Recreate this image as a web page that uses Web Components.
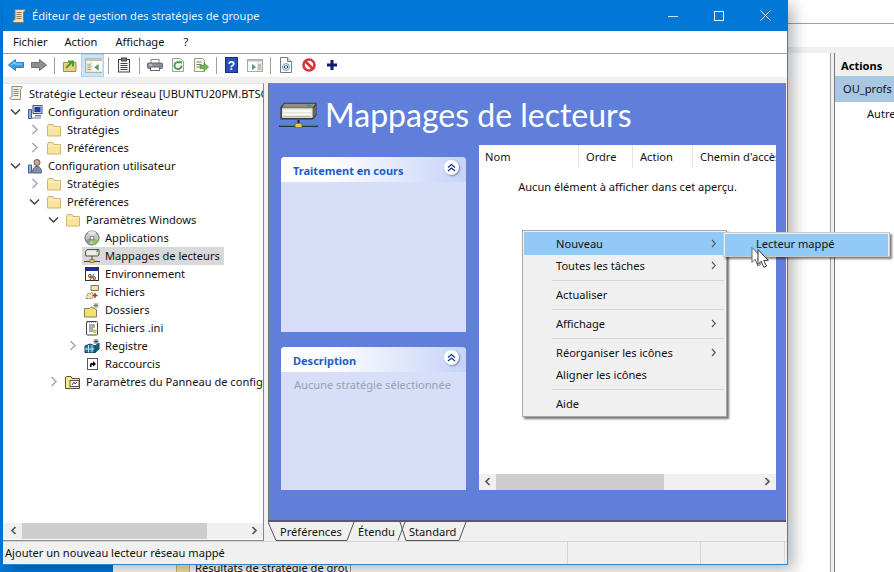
<!DOCTYPE html>
<html lang="fr"><head><meta charset="utf-8"><title>Éditeur de gestion des stratégies de groupe</title>
<style>
html,body{margin:0;height:100%;overflow:hidden}
body{background:#0078d7;font:11.1px "Noto Sans","Open Sans",sans-serif;color:#111;position:relative;width:894px;height:572px}
</style></head><body>
<bg-window></bg-window>
<gpo-window>
  <title-bar slot="title">Éditeur de gestion des stratégies de groupe</title-bar>
  <menu-bar slot="menu"><span>Fichier</span><span>Action</span><span style="margin-left:1px">Affichage</span><span style="margin-left:2px">?</span></menu-bar>
  <tool-bar slot="tools"></tool-bar>
  <tree-pane slot="tree">
    <tree-row level="0" icon="scroll" root>Stratégie Lecteur réseau [UBUNTU20PM.BTSC</tree-row>
    <tree-row level="1" chev="open" icon="computer">Configuration ordinateur</tree-row>
    <tree-row level="2" chev="closed" icon="folder">Stratégies</tree-row>
    <tree-row level="2" chev="closed" icon="folder">Préférences</tree-row>
    <tree-row level="1" chev="open" icon="user">Configuration utilisateur</tree-row>
    <tree-row level="2" chev="closed" icon="folder">Stratégies</tree-row>
    <tree-row level="2" chev="open" icon="folder">Préférences</tree-row>
    <tree-row level="3" chev="open" icon="folder">Paramètres Windows</tree-row>
    <tree-row level="4" icon="disc">Applications</tree-row>
    <tree-row level="4" icon="drive" selected>Mappages de lecteurs</tree-row>
    <tree-row level="4" icon="env">Environnement</tree-row>
    <tree-row level="4" icon="files">Fichiers</tree-row>
    <tree-row level="4" icon="newfolder">Dossiers</tree-row>
    <tree-row level="4" icon="ini">Fichiers .ini</tree-row>
    <tree-row level="4" chev="closed" icon="registry">Registre</tree-row>
    <tree-row level="4" icon="shortcut">Raccourcis</tree-row>
    <tree-row level="3" chev="closed" icon="cpanel">Paramètres du Panneau de config</tree-row>
  </tree-pane>
  <ext-pane slot="main">
    <task-panel title="Traitement en cours" style="height:175px"></task-panel>
    <task-panel title="Description" style="height:143px;margin-top:15px"><span style="color:#9aa0b4">Aucune stratégie sélectionnée</span></task-panel>
    <list-view slot="list"></list-view>
  </ext-pane>
  <tab-strip slot="tabs"></tab-strip>
  <status-bar slot="status">Ajouter un nouveau lecteur réseau mappé</status-bar>
</gpo-window>
<context-menu></context-menu>
<script>
const ICONS={
scroll:`<path d="M4 1.500h9.500c.8 0 1 1 .3 1.500L12.500 4v8.500c0 1 1 1.500 0 2H3.500C2 14.500 1.500 13 2.500 12L4 11.500V3c0-.8-.5-1.500 0-1.500z" fill="#f3e2b8" stroke="#8a7a55"/><path d="M5.500 4.500h5M5.500 6.500h5M5.500 8.500h5M5.500 10.500h5" stroke="#8a7a55"/>`,
scrollg:`<path d="M4 1.500h9.500c.8 0 1 1 .3 1.500L12.500 4v8.500c0 1 1 1.500 0 2H3.500C2 14.500 1.500 13 2.500 12L4 11.500V3c0-.8-.5-1.500 0-1.500z" fill="#f4efdf" stroke="#8d8d80"/><path d="M5.500 4.500h5M5.500 6.500h5M5.500 8.500h5M5.500 10.500h5" stroke="#8d8d80"/>`,
folder:`<path d="M1.500 3.500V14h13V4.500H8L7 2.500H3z" fill="#f8e3a0" stroke="#d0b56a"/><path d="M2 6h12" stroke="#fdf3cf"/>`,
computer:`<rect x="6" y="1.500" width="9" height="8" fill="#c5d3e8" stroke="#44588a"/><rect x="7.500" y="3" width="6" height="5" fill="#1f3f9f"/><path d="M8 11h6v1.500H8z" fill="#6b7ea8"/><path d="M1.500 5.500h3v9h-3z" fill="#8fb2dc" stroke="#41608f"/><path d="M5 14h9" stroke="#778"/>`,
user:`<circle cx="10" cy="4.500" r="3" fill="#c9a98e" stroke="#6c5b52"/><path d="M5.500 15c0-5 2-6.500 4.500-6.500s4.500 1.500 4.500 6.500z" fill="#7e8ea8" stroke="#56627a"/><path d="M1.500 7h3v8h-3z" fill="#8fb2dc" stroke="#41608f"/>`,
disc:`<circle cx="8" cy="8" r="7" fill="#c4cbc4" stroke="#5f6a5f"/><path d="M8 8L4 2.500A7 7 0 0 1 12 2.500z" fill="#e4e8e2"/><path d="M8 8l6.500 2A7 7 0 0 1 9 15z" fill="#87c55a"/><path d="M8 8L1.500 10A7 7 0 0 0 5 14.500z" fill="#909890"/><circle cx="8" cy="8" r="2" fill="#fff" stroke="#666"/>`,
drive:`<path d="M1.500 3.500 3 1.500h12v5.500l-1.500 1h-12z" fill="#dcdcd4" stroke="#555"/><path d="M3 4h9M3 6h9" stroke="#fff"/><path d="M12.500 3h1.500" stroke="#2a9a3a" stroke-width="1.500"/><path d="M0 13.500h16" stroke="#444"/><path d="M8 8v4" stroke="#444"/><rect x="6" y="11.500" width="4" height="3" fill="#e8cc4a" stroke="#806a20" stroke-width=".7"/>`,
env:`<rect x="1.500" y="1.500" width="13" height="13" fill="#fff" stroke="#333"/><path d="M2 2h12v3H2z" fill="#1f2f8f"/><text x="8" y="13.500" font-size="9" font-family="Liberation Sans" font-weight="bold" text-anchor="middle" fill="#333">%</text>`,
files:`<path d="M7 1.500h7.500v5H7z" fill="#f4e4a0" stroke="#777"/><path d="M2 14.500 4 9l3 1 1-2 2 3-2 3.500z" fill="#f6e7ae" stroke="#777" stroke-dasharray="1.500 1"/><path d="M11 9v5M8.500 11.500h5" stroke="#c22222" stroke-width="1.400"/>`,
newfolder:`<path d="M.5 6.500h5l1.500-1.500 5.500 2.500V15H.5z" fill="#efe07a" stroke="#8a8244"/><path d="M12 1v5M9.500 3.500h5M10 1.500l4 4M14 1.500l-4 4" stroke="#777"/>`,
ini:`<rect x="2.500" y="1.500" width="11" height="13.500" rx="1" fill="#fff" stroke="#444"/><path d="M3.500 1v1.500M5.500 1v1.500M7.500 1v1.500M9.500 1v1.500M11.500 1v1.500" stroke="#444"/><path d="M5 5h6M5 7h6M5 9h4M5 11h4" stroke="#555"/><path d="M9 9.500h3.500V13H9z" fill="#d8c83a"/>`,
registry:`<path d="M1 8l5-2 5 2v6.500H1z" fill="#1f7fa0" stroke="#0f4660"/><path d="M1 11h10M4.500 7v7.500M8 7v7.500" stroke="#bfe4ee"/><path d="M11 8l4-3v6l-4 3.500z" fill="#14607d" stroke="#0f4660"/><path d="M12 1v5M9.500 3.500h5M10 1.500l4 4M14 1.500l-4 4" stroke="#556"/>`,
shortcut:`<rect x="3.500" y="2.500" width="10" height="11" fill="#fff" stroke="#555"/><path d="M6 11V8.500c0-1 .8-1.500 1.500-1.500H9V5L12 8 9 10.500V9H8c-.5 0-.5.300-.5 .6V11z" fill="#000"/>`,
cpanel:`<path d="M.5 3.500V14.500h14V4.500H7L6 2.500H2z" fill="#f7ea8e" stroke="#5d5326"/><rect x="5" y="6.500" width="9" height="6" fill="#fff" stroke="#555"/><path d="M7 11l2-3 1 2 2-2" stroke="#903030" fill="none"/>`,
back:`<path d="M.5 8l7-5.500v3h8v5h-8v3z" fill="#3d9de0" stroke="#2b7fc4" stroke-linejoin="round"/><path d="M3 8l4-3v2h7" stroke="#a8daf9" fill="none"/>`,
fwd:`<path d="M15.500 8l-7-5.500v3h-8v5h8v3z" fill="#8f8f8f" stroke="#727272" stroke-linejoin="round"/>`,
up:`<path d="M1.500 5.500h12.500v9H1.500z" fill="#eccf7e" stroke="#a68b43"/><path d="M4 11 10 5M6 4.500h5v5" stroke="#4d9c2e" stroke-width="2" fill="none"/>`,
tree:`<rect x="1.500" y="2.500" width="15" height="12" fill="#fbfbf8" stroke="#a8a8a8"/><path d="M2 3h14v1.500H2z" fill="#bdbdbd"/><path d="M2 5.500h5.500V14H2z" fill="#e3e6dc"/><path d="M3 8h3M3 10h3M3 12h3" stroke="#8f9f80"/><path d="M13 7v6l-4-3z" fill="#4d9c6a"/>`,
clip:`<rect x="2.500" y="2.500" width="11" height="12.500" fill="#f6f6f6" stroke="#444"/><rect x="5.500" y="1" width="5" height="3" fill="#777" stroke="#444"/><path d="M4.500 6.500h7M4.500 8.500h7M4.500 10.500h7M4.500 12.500h7" stroke="#444"/>`,
print:`<rect x="4" y="2.500" width="8" height="4" fill="#fff" stroke="#888"/><rect x=".5" y="6" width="15" height="5.500" rx="1" fill="#8a9099" stroke="#666"/><rect x="3.500" y="10" width="9" height="3.500" fill="#fff" stroke="#666"/><path d="M2 8h3" stroke="#dfe4e8"/>`,
refresh:`<path d="M2.500 1.500h8l3 3v10h-11z" fill="#f7f7f2" stroke="#a4a494"/><path d="M11.500 8.500a3.500 3.500 0 1 1-1.200-2.600" fill="none" stroke="#3b9c4a" stroke-width="1.800"/><path d="M9 3.800l3 .4-.5 3z" fill="#3b9c4a"/>`,
export:`<path d="M1.500 1.500h8l2 2v11h-10z" fill="#f9f7e8" stroke="#a09a7a"/><path d="M3.500 5h5M3.500 7.500h5M3.500 10h3" stroke="#777"/><path d="M7 8.500h4V6l4.500 4-4.500 4v-2.500H7z" fill="#70b848" stroke="#4a8f2f" stroke-width=".7"/>`,
help:`<rect x="1.500" y=".5" width="12" height="15" fill="#2a4fb4" stroke="#142f84"/><text x="7.500" y="12.500" font-size="12" font-family="Liberation Sans" font-weight="bold" text-anchor="middle" fill="#fff">?</text>`,
pane:`<rect x=".5" y="2.500" width="15" height="12" fill="#fbfbf8" stroke="#a8a8a8"/><path d="M1 3h14v1.500H1z" fill="#bdbdbd"/><path d="M10 5.500h5V14h-5z" fill="#e3e6dc"/><path d="M11 8h3M11 10h3M11 12h3" stroke="#8f9f80"/><path d="M5 7v6l4-3z" fill="#4d9c6a"/>`,
doc:`<path d="M2.500 .5h7l4 4v11h-11z" fill="#fff" stroke="#6f7c92"/><path d="M9.500 .5v4h4" fill="#d5dcec" stroke="#6f7c92"/><circle cx="8" cy="10" r="3.500" fill="#dce7f7" stroke="#8aa"/><path d="M7.500 8.500 6 10l1.500 1.500M8.500 8.500 10 10l-1.500 1.500" stroke="#335" fill="none"/>`,
stop:`<circle cx="8" cy="8" r="5.500" fill="#fff" stroke="#d8343a" stroke-width="2.600"/><path d="M4.500 4.500l7 7" stroke="#d8343a" stroke-width="2.600"/>`,
plus:`<path d="M6.500 3h3v3.500H13v3H9.500V13h-3V9.500H3v-3h3.500z" fill="#101a6e"/>`
};
const svg=(n,s=16)=>`<svg width="${s}" height="${s}" viewBox="0 0 16 16" style="display:block;flex:none">${ICONS[n]||''}</svg>`;
const bigDrive=`<svg width="40" height="27" viewBox="0 0 41 27" style="display:block;flex:none">
<path d="M1.500 6 5 1.500h33.500V14L35 18.500H1.500z" fill="#3a3a3a"/><path d="M3 7h31.500v10H3z" fill="#e6e6dc"/><path d="M5.500 2.500h32L34.500 6.500H3z" fill="#8f8f80"/>
<path d="M4 10h29M4 13.500h29" stroke="#fff" stroke-width="1.500"/><path d="M4 15.500h29" stroke="#b8b8ac"/><path d="M29 4.500h4" stroke="#2ea84a" stroke-width="2"/><path d="M35 7l3-3v9l-3 4z" fill="#6a6a60"/>
<path d="M20 19v4" stroke="#222" stroke-width="2"/><path d="M0 25.500h40" stroke="#111"/><path d="M2 24.500h36" stroke="#2ba05a"/><rect x="16.500" y="22.500" width="7" height="4.500" fill="#e8cc4a" stroke="#6a5a20" stroke-width=".7"/></svg>`;
function def(name,css,html,init){
  customElements.define(name,class extends HTMLElement{
    connectedCallback(){
      if(this.shadowRoot)return;
      const r=this.attachShadow({mode:'open'});
      r.innerHTML=`<style>${css}</style>`+(typeof html==='function'?html(this):html);
      if(init)init(this,r);
    }
  });
}
def('title-bar',`:host{display:flex;align-items:center;height:31px;background:#0078d7;color:#fff;padding-left:8px;margin-right:-1px}
 .t{margin-left:5px;flex:1;color:#e9f3fb;font-size:11.1px} .b{width:46px;height:31px;display:flex;align-items:center;justify-content:center}`,
 ()=>`${svg('scroll')}<span class="t"><slot></slot></span>
 <span class="b"><svg width="10" height="10"><path d="M0 5.500h10" stroke="#cfe4f6"/></svg></span>
 <span class="b"><svg width="10" height="10"><rect x=".5" y=".5" width="9" height="9" fill="none" stroke="#e2effa"/></svg></span>
 <span class="b"><svg width="11" height="11"><path d="M.5.500l10 10M10.500.500l-10 10" stroke="#e2effa"/></svg></span>`);
def('menu-bar',`:host{display:flex;align-items:center;height:22px;background:#fff;border-bottom:1px solid #a0a0a0;padding-left:10px;gap:17px}`,`<slot></slot>`);
def('tool-bar',`:host{display:flex;align-items:center;height:23px;background:#fff;padding-left:1px}
 .b{width:23px;height:23px;display:flex;align-items:center;justify-content:center;box-sizing:border-box}
 .on{background:#cce4f7;border:1px solid #a9d4f5}
 .s{width:8px;height:17px;display:flex;justify-content:center}.s i{width:1px;background:#a0a0a0;display:block}`,
 ()=>{const g=[['back','fwd'],['up','tree*'],['clip'],['print','refresh','export'],['help','pane'],['doc','stop','plus']];
 return g.map(a=>a.map(n=>{const on=n.endsWith('*');n=n.replace('*','');return `<span class="b${on?' on':''}">${svg(n,n=='tree'?18:16)}</span>`}).join('')).join('<span class="s"><i></i></span>')});
def('h-scroll',`:host{display:flex;align-items:center;height:16px;background:#f0f0f0;flex:none}
 .a{width:17px;height:16px;display:flex;align-items:center;justify-content:center;flex:none}
 .t{background:#cdcdcd;height:16px;display:block;flex:none}.g{flex:1}`,
 h=>`<span class="a"><svg width="7" height="9"><path d="M5.500 1 2 4.500 5.500 8" fill="none" stroke="#555" stroke-width="1.700"/></svg></span>
 <span class="t" style="width:${h.getAttribute('thumb')}px"></span><span class="g"></span>
 <span class="a"><svg width="7" height="9"><path d="M1.500 1 5 4.500 1.500 8" fill="none" stroke="#555" stroke-width="1.700"/></svg></span>`);
def('tree-pane',`:host{display:flex;flex-direction:column;background:#fff;border-right:1px solid #828790;border-bottom:1px solid #828790;border-top:1px solid #e4e4e4;box-sizing:border-box;min-width:0;overflow:hidden}
 .rows{flex:1;overflow:hidden;min-width:0} h-scroll{margin-bottom:1px;padding-left:2px}`,
 `<div class="rows"><slot></slot></div><h-scroll thumb="185"></h-scroll>`);
def('tree-row',`:host{display:block;height:18px;white-space:nowrap}
 :host([root]){height:19px}
 .r{display:flex;align-items:center;height:100%;position:relative}
 .c{width:22px;flex:none;display:flex;justify-content:flex-start;box-sizing:border-box}
 .sel{position:absolute;left:-2px;top:-1px;height:18px;width:142px;background:#d9d9d9}
 .i,.x,.c{position:relative}
 .x{margin-left:5px}`,
 h=>{const lv=+h.getAttribute('level'),c=h.getAttribute('chev'),sel=h.hasAttribute('selected');
  const pad=lv==0?5:(lv-1)*19+2;
  const chev=c=='open'?`<svg width="11" height="8" style="margin-left:5px"><path d="M1 1.500 5.500 6 10 1.500" fill="none" stroke="#404040" stroke-width="1.500"/></svg>`:c=='closed'?`<svg width="8" height="11" style="margin-left:7px"><path d="M1.500 1 6 5.500 1.500 10" fill="none" stroke="#a8a8a8" stroke-width="1.500"/></svg>`:'';
  const n=lv==0?'scrollg':h.getAttribute('icon');
  return `<div class="r" style="padding-left:${pad}px">${lv?`<span class="c">${chev}</span>`:''}<span style="position:relative;display:flex;align-items:center">${sel?'<span class="sel"></span>':''}<span class="i">${svg(n)}</span><span class="x"><slot></slot></span></span></div>`});
def('task-panel',`:host{display:flex;flex-direction:column;border-radius:4px 4px 0 0;background:#d6dff7;flex:none;overflow:hidden}
 .h{height:25px;box-sizing:border-box;display:flex;align-items:center;justify-content:space-between;padding:3px 7px 0 12px;background:linear-gradient(90deg,#fff 0,#fff 25%,#c6d3f7 100%);font-weight:700;font-size:11px;color:#215dc6}
 .c{width:15px;height:15px;margin-top:-6px;border-radius:50%;background:#fff;box-shadow:1px 1px 2px #7a88b0;display:flex;align-items:center;justify-content:center}
 .b{padding:5px 13px;white-space:nowrap}`,
 h=>`<div class="h"><span>${h.getAttribute('title')}</span><span class="c"><svg width="9" height="9"><path d="M1 4.500l3.500-3 3.500 3M1 8l3.500-3 3.500 3" fill="none" stroke="#163a8a" stroke-width="1.300"/></svg></span></div><div class="b"><slot></slot></div>`);
def('ext-pane',`:host{display:flex;flex-direction:column;background:#5f7fdb;border-top:1px solid #888;border-left:1px solid #777;box-sizing:border-box;min-width:0;overflow:hidden}
 .hd{height:61px;display:flex;align-items:center;padding-left:10px;color:#fff;font:32px "Lato","Open Sans",sans-serif;gap:6px;flex:none}
 .bd{display:flex;padding:0 10px 0 12px;gap:13px;flex:1;min-height:0}
 .l{width:185px;padding-top:12px;display:flex;flex-direction:column}
 ::slotted(list-view){width:297px;height:345px}`,
 ()=>`<div class="hd">${bigDrive}<span>Mappages de lecteurs</span></div><div class="bd"><div class="l"><slot></slot></div><slot name="list"></slot></div>`);
def('list-view',`:host{display:flex;flex-direction:column;background:#fff;overflow:hidden}
 .h{display:flex;height:23px;flex:none;white-space:nowrap;overflow:hidden}
 .h span{box-sizing:border-box;padding-left:6px;border-right:1px solid #e5e5e5;line-height:23px;flex:none}
 .m{flex:1;text-align:center;padding-top:11px}`,
 `<div class="h"><span style="width:100px">Nom</span><span style="width:54px;padding-left:7px">Ordre</span><span style="width:60px;padding-left:7px">Action</span><span style="width:120px;padding-left:7px;border:0">Chemin d'accès</span></div><div class="m">Aucun élément à afficher dans cet aperçu.</div><h-scroll thumb="168"></h-scroll>`);
def('tab-strip',`:host{display:block;height:19px;background:#f0f0f0;border-top:2px solid #555c70;position:relative}
 .t{display:flex;height:19px;align-items:center;padding-left:12px;white-space:nowrap;position:relative}
 .t span{flex:none}.t span:nth-child(1){width:78px}.t span:nth-child(2){width:51px}
 svg{position:absolute;left:0;top:0}`,
 `<svg width="210" height="19"><path d="M0 0 8 18.500H79L86 0M132 0 138 18.500M130 18.500 137 0M138 18.500H191L198 0" fill="none" stroke="#555"/></svg><div class="t"><span>Préférences</span><span>Étendu</span><span>Standard</span></div>`);
def('status-bar',`:host{display:flex;height:23px;align-items:center;background:#f0f0f0;border-top:1px solid #d7d7d7}
 .a{width:564px;padding-left:2px;box-sizing:border-box}.d{width:133px;height:100%;border-left:1px solid #d7d7d7;box-sizing:border-box}.e{width:85px;height:100%;border-left:1px solid #d7d7d7;border-right:1px solid #d7d7d7;box-sizing:border-box}`,
 `<span class="a"><slot></slot></span><span class="d"></span><span class="e"></span>`);
def('gpo-window',`:host{position:absolute;left:3px;top:0;width:785px;height:565px;box-sizing:border-box;display:flex;flex-direction:column;background:#f0f0f0;border:solid #2a86d0;border-width:0 1px 1px 0;box-shadow:6px 5px 14px rgba(0,0,0,.28)}
 .band{height:6px;flex:none}
 .tm{display:grid;grid-template-columns:261px 518px;column-gap:4px;height:458px;flex:none}
 .r{display:flex;flex-direction:column;min-height:0}
 .r slot[name=main]::slotted(*){flex:1}`,
 `<slot name="title"></slot><slot name="menu"></slot><slot name="tools"></slot><div class="band"></div>
 <div class="tm"><slot name="tree"></slot><div class="r"><slot name="main"></slot><slot name="tabs"></slot></div></div><slot name="status"></slot>`);
def('bg-window',`:host{position:absolute;left:113px;top:0;right:0;bottom:0;background:#fff;display:block}
 .l{position:absolute;left:0;right:0;top:23px;height:1px;background:#a0a0a0}
 .b{position:absolute;left:0;right:0;top:47px;height:6px;background:#f0f0f0}
 .v{position:absolute;left:717px;top:53px;bottom:0;width:5px;background:#f0f0f0;border-left:1px solid #a0a0a0;border-right:1px solid #777;box-sizing:border-box}
 .ap{position:absolute;left:722px;top:53px;bottom:0;right:0}
 .ah{height:23px;font-weight:700;line-height:25px;padding-left:6px;background:#f0f0f0;white-space:nowrap;color:#000}
 .as{height:26px;background:#a9c6e3;line-height:26px;padding-left:8px;white-space:nowrap;overflow:hidden}
 .it{padding:4px 0 0 32px;white-space:nowrap}
 .res{position:absolute;left:62px;top:558px;display:flex;align-items:center;gap:4px;white-space:nowrap;height:18px;border-right:1px solid #999;padding-right:2px}
 .res span{width:153px;overflow:hidden}`,
 ()=>`<div class="l"></div><div class="b"></div><div class="v"></div><div class="ap"><div class="ah">Actions</div><div class="as">OU_profs</div><div class="it">Autre</div></div><div class="res">${svg('folder')}<span>Résultats de stratégie de grou</span></div>`);
def('menu-item',`:host{display:flex;align-items:center;justify-content:space-between;height:22px;box-sizing:border-box;padding:0 9px 2px 32px;white-space:nowrap}
 :host([hot]){background:#91c9f7;height:23px;padding-bottom:0}
 svg{display:block}`,
 h=>`<span><slot></slot></span>${h.hasAttribute('sub')?'<svg width="5" height="9"><path d="M1 1 4.300 4.500 1 8" fill="none" stroke="#555" stroke-width="1.100"/></svg>':''}`);
def('menu-sep',`:host{display:block;height:7px;position:relative}i{position:absolute;left:28px;right:1px;top:3px;height:1px;background:#d7d7d7}`,`<i></i>`);
def('context-menu',`:host{position:absolute;left:522px;top:230px;display:block}
 .m{position:absolute;left:0;top:0;width:205px;height:187px;box-sizing:border-box;background:#f0f0f0;border:1px solid #a9a9a9;padding:1px;box-shadow:2px 2px 2px rgba(0,0,0,.55)}
 .s{position:absolute;left:201px;top:2px;width:167px;height:25px;box-sizing:border-box;background:#f0f0f0;border:1px solid #c8c8c8;padding:1px;box-shadow:2px 2px 2px rgba(0,0,0,.5)}
 .s menu-item{padding:0 9px 3px 31px;height:22px}
 .cur{position:absolute;left:229px;top:16px}`,
 `<div class="m"><menu-item hot sub>Nouveau</menu-item><menu-item sub>Toutes les tâches</menu-item><menu-sep></menu-sep><menu-item>Actualiser</menu-item><menu-sep></menu-sep><menu-item sub>Affichage</menu-item><menu-sep></menu-sep><menu-item sub>Réorganiser les icônes</menu-item><menu-item>Aligner les icônes</menu-item><menu-sep></menu-sep><menu-item>Aide</menu-item></div>
 <div class="s"><menu-item hot>Lecteur mappé</menu-item></div>
 <svg class="cur" width="22" height="24" viewBox="0 0 22 24"><path d="M1 1.500v15l3.200-3.200 2.600 6.500 2.700-1.100-2.700-6.300h4.500z" fill="#fff" stroke="#666"/><path d="M7 3.500v15l3.200-3.200 2.600 6 2.700-1.100-2.700-5.800h4.500z" fill="#fff" stroke="#333"/></svg>`);
</script>
</body></html>
